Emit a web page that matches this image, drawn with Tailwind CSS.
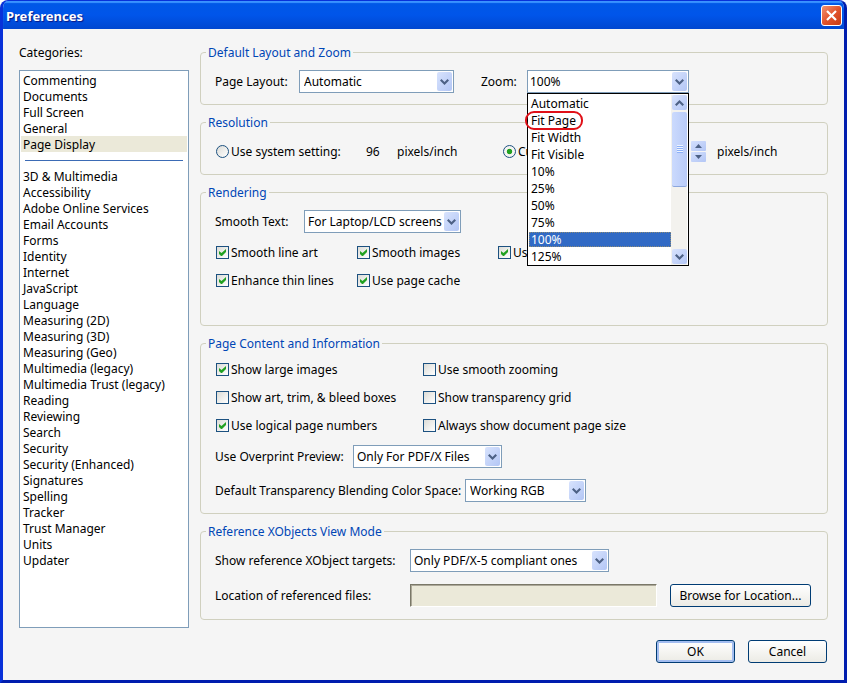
<!DOCTYPE html>
<html lang="en">
<head>
    <meta charset="UTF-8">
    <meta name="viewport" content="width=device-width, initial-scale=1.0">
    <title>Preferences</title>
    <script src="https://cdn.jsdelivr.net/npm/@tailwindcss/browser@4"></script>
</head>
<body class="bg-white font-['Noto_Sans',sans-serif] text-[12px] leading-4 text-black">

    <!-- Shared shapes -->
    <svg class="hidden">
        <symbol id="arrow-down" viewBox="0 0 9 6"><path d="M0 1.5 1.5 0 4.5 3 7.5 0 9 1.5 4.5 6z" fill="#4d6185"/></symbol>
        <symbol id="arrow-up" viewBox="0 0 9 6"><path d="M0 4.5 1.5 6 4.5 3 7.5 6 9 4.5 4.5 0z" fill="#4d6185"/></symbol>
        <symbol id="tick" viewBox="0 0 7 7"><path d="M0 2v3l2.5 2.5L7 3V0L2.5 4z" fill="#21a121"/></symbol>
    </svg>

    <div class="flex min-h-screen flex-col overflow-hidden rounded-t-lg border-x-3 border-b-3 border-t border-[#0831d9] border-r-[#001dae] border-b-[#001dae] bg-[#f5f5f5]">

        <!-- Title bar -->
        <header class="flex h-7 items-center justify-between bg-linear-to-b from-[#0058e6] via-[#0055ea] to-[#0047d0] pl-[3px] pr-0.5 shadow-[inset_0_2px_1px_#3a93ff]">
            <h1 class="pt-0.5 text-[13px] font-bold text-white [text-shadow:1px_1px_1px_#0a1883]">Preferences</h1>
            <button type="button" aria-label="Close" class="flex size-[21px] items-center justify-center rounded-[3px] border border-white bg-linear-to-br from-[#f0916f] via-[#e2532b] to-[#c93a10]">
                <svg class="size-[11px]" viewBox="0 0 11 11"><path d="M1 1 10 10M10 1 1 10" stroke="#fff" stroke-width="2.2"/></svg>
            </button>
        </header>

        <main class="flex flex-1 gap-[11px] pl-4 pr-4 pt-[15px] pb-[17px]">

            <!-- Categories -->
            <section class="flex w-[170px] shrink-0 flex-col">
                <h2 id="categories" class="h-4 leading-[18px]">Categories:</h2>
                <ul aria-labelledby="categories" class="mt-[10px] mb-[35px] flex-1 border border-[#7f9db9] bg-white px-px pt-px leading-[18px] *:h-4 *:px-0.5">
                    <li>Commenting</li>
                    <li>Documents</li>
                    <li>Full Screen</li>
                    <li>General</li>
                    <li class="bg-[#ebe9d9]">Page Display</li>
                    <li class="flex items-center"><hr class="mx-0.5 w-full border-[#3b6bb5]"></li>
                    <li>3D &amp; Multimedia</li>
                    <li>Accessibility</li>
                    <li>Adobe Online Services</li>
                    <li>Email Accounts</li>
                    <li>Forms</li>
                    <li>Identity</li>
                    <li>Internet</li>
                    <li>JavaScript</li>
                    <li>Language</li>
                    <li>Measuring (2D)</li>
                    <li>Measuring (3D)</li>
                    <li>Measuring (Geo)</li>
                    <li>Multimedia (legacy)</li>
                    <li>Multimedia Trust (legacy)</li>
                    <li>Reading</li>
                    <li>Reviewing</li>
                    <li>Search</li>
                    <li>Security</li>
                    <li>Security (Enhanced)</li>
                    <li>Signatures</li>
                    <li>Spelling</li>
                    <li>Tracker</li>
                    <li>Trust Manager</li>
                    <li>Units</li>
                    <li>Updater</li>
                </ul>
            </section>

            <form class="flex min-w-0 flex-1 flex-col gap-[9px]">

                <!-- Default Layout and Zoom -->
                <fieldset class="min-w-0 rounded-[4px] border border-[#d0d0bf] px-[5px]">
                    <legend class="h-4 px-0.5 leading-[18px] text-[#0046b5]">Default Layout and Zoom</legend>
                    <div class="flex items-center px-[9px] pt-[10px] pb-[11px]">
                        <label for="page-layout" class="w-[84px] shrink-0">Page Layout:</label>
                        <div class="relative w-[155px]">
                            <select id="page-layout" class="h-[23px] w-full appearance-none border border-[#7f9db9] bg-white pl-1 leading-4">
                                <option>Automatic</option>
                            </select>
                            <span class="pointer-events-none absolute inset-y-0.5 right-0.5 flex w-[15px] items-center justify-center rounded-[2px] bg-linear-to-br from-[#d8e3fd] to-[#b3c6f5]"><svg class="h-1.5 w-[9px]"><use href="#arrow-down"/></svg></span>
                        </div>
                        <label for="zoom" class="ml-[27px] w-[46px] shrink-0">Zoom:</label>
                        <div class="relative w-[162px]">
                            <select id="zoom" class="h-[23px] w-full appearance-none border border-[#7f9db9] bg-white pl-0.5 leading-4">
                                <option>100%</option>
                            </select>
                            <span class="pointer-events-none absolute inset-y-0.5 right-0.5 flex w-[15px] items-center justify-center rounded-[2px] bg-linear-to-br from-[#d8e3fd] to-[#b3c6f5]"><svg class="h-1.5 w-[9px]"><use href="#arrow-down"/></svg></span>

                            <!-- Open zoom list -->
                            <div class="absolute inset-x-0 top-full z-10 flex border border-black bg-white px-px pt-px">
                                <ul role="listbox" aria-label="Zoom" class="flex-1 leading-[17px] *:px-0.5">
                                    <li role="option">Automatic</li>
                                    <li role="option" class="relative">Fit Page<span class="absolute -left-1 -top-px h-[19px] w-[58px] rounded-[9px] border-2 border-[#e01018]"></span></li>
                                    <li role="option">Fit Width</li>
                                    <li role="option">Fit Visible</li>
                                    <li role="option">10%</li>
                                    <li role="option">25%</li>
                                    <li role="option">50%</li>
                                    <li role="option">75%</li>
                                    <li role="option" aria-selected="true" class="my-px h-[15px] bg-[#316ac5] leading-[15px] text-white outline-1 -outline-offset-1 outline-dotted outline-[#8a8a78]">100%</li>
                                    <li role="option">125%</li>
                                </ul>
                                <div class="flex w-4 flex-col gap-0.5 bg-[#f3f2ee] pb-px pl-px">
                                    <span class="flex h-[15px] items-center justify-center rounded-[2px] bg-linear-to-br from-[#d8e3fd] to-[#b3c6f5]"><svg class="h-1.5 w-[9px]"><use href="#arrow-up"/></svg></span>
                                    <span class="flex h-[75px] items-center justify-center rounded-[2px] border-b border-[#8ba6dd] bg-linear-to-r from-[#cbdafd] to-[#b9cbf8]"><svg class="h-2 w-1.5" viewBox="0 0 6 8"><path d="M0 .5h6M0 2.5h6M0 4.5h6M0 6.5h6" stroke="#eef4fe"/><path d="M0 1.5h6M0 3.5h6M0 5.5h6M0 7.5h6" stroke="#8cb0f8"/></svg></span>
                                    <span class="mt-auto flex h-[15px] items-center justify-center rounded-[2px] bg-linear-to-br from-[#d8e3fd] to-[#b3c6f5]"><svg class="h-1.5 w-[9px]"><use href="#arrow-down"/></svg></span>
                                </div>
                            </div>
                        </div>
                    </div>
                </fieldset>

                <!-- Resolution -->
                <fieldset class="min-w-0 rounded-[4px] border border-[#d0d0bf] px-[5px]">
                    <legend class="h-4 px-0.5 leading-[18px] text-[#0046b5]">Resolution</legend>
                    <div class="flex items-center px-[10px] pt-[10px] pb-[11px]">
                        <label class="flex w-[150px] shrink-0 items-center gap-0.5">
                            <input type="radio" name="resolution" class="size-[13px] appearance-none rounded-full border border-[#1c5180] bg-linear-to-br from-[#dcdcd7] to-white">
                            Use system setting:
                        </label>
                        <span class="w-[31px] shrink-0">96</span>
                        <span class="w-[106px] shrink-0">pixels/inch</span>
                        <label class="flex w-[137px] shrink-0 items-center gap-0.5">
                            <input type="radio" name="resolution" checked class="size-[13px] appearance-none rounded-full border border-[#1c5180] bg-radial from-[#21a121] from-30% to-[#f4f4f1] to-40%">
                            Custom resolution:
                        </label>
                        <input type="text" value="110" aria-label="Custom resolution" class="h-[21px] w-12 border border-[#7f9db9] bg-white px-1">
                        <span class="ml-[3px] flex h-[23px] w-[15px] shrink-0 flex-col gap-px py-px">
                            <button type="button" aria-label="Increase" class="flex flex-1 items-center justify-center rounded-[1px] bg-linear-to-br from-[#d3dffd] to-[#b3c6f5]"><svg class="h-1 w-[7px]" viewBox="0 0 7 4"><path d="M0 4 3.5 0 7 4z" fill="#4d6185"/></svg></button>
                            <button type="button" aria-label="Decrease" class="flex flex-1 items-center justify-center rounded-[1px] bg-linear-to-br from-[#d3dffd] to-[#b3c6f5]"><svg class="h-1 w-[7px]" viewBox="0 0 7 4"><path d="M0 0h7L3.5 4z" fill="#4d6185"/></svg></button>
                        </span>
                        <span class="ml-[11px]">pixels/inch</span>
                    </div>
                </fieldset>

                <!-- Rendering -->
                <fieldset class="min-w-0 rounded-[4px] border border-[#d0d0bf] px-[5px]">
                    <legend class="h-4 px-0.5 leading-[18px] text-[#0046b5]">Rendering</legend>
                    <div class="flex flex-col gap-3 px-[9px] pt-[10px] pb-9">
                        <div class="flex items-center">
                            <label for="smooth-text" class="w-[89px] shrink-0">Smooth Text:</label>
                            <div class="relative w-[157px]">
                                <select id="smooth-text" class="h-[23px] w-full appearance-none border border-[#7f9db9] bg-white pl-[3px] leading-4">
                                    <option>For Laptop/LCD screens</option>
                                </select>
                                <span class="pointer-events-none absolute inset-y-0.5 right-0.5 flex w-[15px] items-center justify-center rounded-[2px] bg-linear-to-br from-[#d8e3fd] to-[#b3c6f5]"><svg class="h-1.5 w-[9px]"><use href="#arrow-down"/></svg></span>
                            </div>
                        </div>
                        <div class="grid grid-cols-[141px_141px_1fr] gap-y-3 pl-px">
                            <label class="flex items-start gap-0.5">
                                <span class="relative mt-px flex"><input type="checkbox" checked class="peer size-[13px] appearance-none border border-[#1c5180] bg-linear-to-br from-[#dcdcd7] to-white"><svg class="pointer-events-none absolute left-[3px] top-[3px] hidden size-[7px] overflow-visible peer-checked:block"><use href="#tick"/></svg></span>
                                Smooth line art
                            </label>
                            <label class="flex items-start gap-0.5">
                                <span class="relative mt-px flex"><input type="checkbox" checked class="peer size-[13px] appearance-none border border-[#1c5180] bg-linear-to-br from-[#dcdcd7] to-white"><svg class="pointer-events-none absolute left-[3px] top-[3px] hidden size-[7px] overflow-visible peer-checked:block"><use href="#tick"/></svg></span>
                                Smooth images
                            </label>
                            <label class="flex items-start gap-0.5">
                                <span class="relative mt-px flex"><input type="checkbox" checked class="peer size-[13px] appearance-none border border-[#1c5180] bg-linear-to-br from-[#dcdcd7] to-white"><svg class="pointer-events-none absolute left-[3px] top-[3px] hidden size-[7px] overflow-visible peer-checked:block"><use href="#tick"/></svg></span>
                                Use local fonts
                            </label>
                            <label class="flex items-start gap-0.5">
                                <span class="relative mt-px flex"><input type="checkbox" checked class="peer size-[13px] appearance-none border border-[#1c5180] bg-linear-to-br from-[#dcdcd7] to-white"><svg class="pointer-events-none absolute left-[3px] top-[3px] hidden size-[7px] overflow-visible peer-checked:block"><use href="#tick"/></svg></span>
                                Enhance thin lines
                            </label>
                            <label class="flex items-start gap-0.5">
                                <span class="relative mt-px flex"><input type="checkbox" checked class="peer size-[13px] appearance-none border border-[#1c5180] bg-linear-to-br from-[#dcdcd7] to-white"><svg class="pointer-events-none absolute left-[3px] top-[3px] hidden size-[7px] overflow-visible peer-checked:block"><use href="#tick"/></svg></span>
                                Use page cache
                            </label>
                        </div>
                    </div>
                </fieldset>

                <!-- Page Content and Information -->
                <fieldset class="min-w-0 rounded-[4px] border border-[#d0d0bf] px-[5px]">
                    <legend class="h-4 px-0.5 leading-[18px] text-[#0046b5]">Page Content and Information</legend>
                    <div class="flex flex-col gap-[11px] px-[9px] pt-[11px] pb-[11px]">
                        <div class="grid grid-cols-[207px_1fr] gap-y-3 pl-px">
                            <label class="flex items-start gap-0.5">
                                <span class="relative mt-px flex"><input type="checkbox" checked class="peer size-[13px] appearance-none border border-[#1c5180] bg-linear-to-br from-[#dcdcd7] to-white"><svg class="pointer-events-none absolute left-[3px] top-[3px] hidden size-[7px] overflow-visible peer-checked:block"><use href="#tick"/></svg></span>
                                Show large images
                            </label>
                            <label class="flex items-start gap-0.5">
                                <input type="checkbox" class="mt-px size-[13px] appearance-none border border-[#1c5180] bg-linear-to-br from-[#dcdcd7] to-white">
                                Use smooth zooming
                            </label>
                            <label class="flex items-start gap-0.5">
                                <input type="checkbox" class="mt-px size-[13px] appearance-none border border-[#1c5180] bg-linear-to-br from-[#dcdcd7] to-white">
                                Show art, trim, &amp; bleed boxes
                            </label>
                            <label class="flex items-start gap-0.5">
                                <input type="checkbox" class="mt-px size-[13px] appearance-none border border-[#1c5180] bg-linear-to-br from-[#dcdcd7] to-white">
                                Show transparency grid
                            </label>
                            <label class="flex items-start gap-0.5">
                                <span class="relative mt-px flex"><input type="checkbox" checked class="peer size-[13px] appearance-none border border-[#1c5180] bg-linear-to-br from-[#dcdcd7] to-white"><svg class="pointer-events-none absolute left-[3px] top-[3px] hidden size-[7px] overflow-visible peer-checked:block"><use href="#tick"/></svg></span>
                                Use logical page numbers
                            </label>
                            <label class="flex items-start gap-0.5">
                                <input type="checkbox" class="mt-px size-[13px] appearance-none border border-[#1c5180] bg-linear-to-br from-[#dcdcd7] to-white">
                                Always show document page size
                            </label>
                        </div>
                        <div class="flex items-center">
                            <label for="overprint" class="w-[138px] shrink-0">Use Overprint Preview:</label>
                            <div class="relative w-[149px]">
                                <select id="overprint" class="h-[23px] w-full appearance-none border border-[#7f9db9] bg-white pl-[3px] leading-4">
                                    <option>Only For PDF/X Files</option>
                                </select>
                                <span class="pointer-events-none absolute inset-y-0.5 right-0.5 flex w-[15px] items-center justify-center rounded-[2px] bg-linear-to-br from-[#d8e3fd] to-[#b3c6f5]"><svg class="h-1.5 w-[9px]"><use href="#arrow-down"/></svg></span>
                            </div>
                        </div>
                        <div class="flex items-center">
                            <label for="blending" class="w-[250px] shrink-0">Default Transparency Blending Color Space:</label>
                            <div class="relative w-[121px]">
                                <select id="blending" class="h-[23px] w-full appearance-none border border-[#7f9db9] bg-white pl-1 leading-4">
                                    <option>Working RGB</option>
                                </select>
                                <span class="pointer-events-none absolute inset-y-0.5 right-0.5 flex w-[15px] items-center justify-center rounded-[2px] bg-linear-to-br from-[#d8e3fd] to-[#b3c6f5]"><svg class="h-1.5 w-[9px]"><use href="#arrow-down"/></svg></span>
                            </div>
                        </div>
                    </div>
                </fieldset>

                <!-- Reference XObjects View Mode -->
                <fieldset class="min-w-0 rounded-[4px] border border-[#d0d0bf] px-[5px]">
                    <legend class="h-4 px-0.5 leading-[18px] text-[#0046b5]">Reference XObjects View Mode</legend>
                    <div class="flex flex-col gap-3 pl-[9px] pr-[11px] pt-[10px] pb-3">
                        <div class="flex items-center">
                            <label for="targets" class="w-[195px] shrink-0">Show reference XObject targets:</label>
                            <div class="relative w-[199px]">
                                <select id="targets" class="h-[23px] w-full appearance-none border border-[#7f9db9] bg-white pl-[3px] leading-4">
                                    <option>Only PDF/X-5 compliant ones</option>
                                </select>
                                <span class="pointer-events-none absolute inset-y-0.5 right-0.5 flex w-[15px] items-center justify-center rounded-[2px] bg-linear-to-br from-[#d8e3fd] to-[#b3c6f5]"><svg class="h-1.5 w-[9px]"><use href="#arrow-down"/></svg></span>
                            </div>
                        </div>
                        <div class="flex items-center">
                            <label for="location" class="w-[195px] shrink-0">Location of referenced files:</label>
                            <input id="location" type="text" readonly class="h-[23px] min-w-0 flex-1 border border-b-white border-l-[#7a7868] border-r-white border-t-[#7a7868] bg-[#ebe9d9] px-1 shadow-[inset_1px_1px_0_#aca899]">
                            <button type="button" class="ml-[13px] h-[23px] w-[141px] shrink-0 rounded-[3px] border border-[#003c74] bg-linear-to-b from-white to-[#ecebe5]">Browse for Location...</button>
                        </div>
                    </div>
                </fieldset>

                <div class="mt-[11px] flex justify-end gap-[13px] pr-px">
                    <button type="submit" class="h-[23px] w-[79px] rounded-[3px] border border-[#003c74] bg-linear-to-b from-white to-[#ecebe5] shadow-[inset_0_0_0_2px_#a3bdf0]">OK</button>
                    <button type="button" class="h-[23px] w-[79px] rounded-[3px] border border-[#003c74] bg-linear-to-b from-white to-[#ecebe5]">Cancel</button>
                </div>
            </form>
        </main>
    </div>

</body>
</html>
